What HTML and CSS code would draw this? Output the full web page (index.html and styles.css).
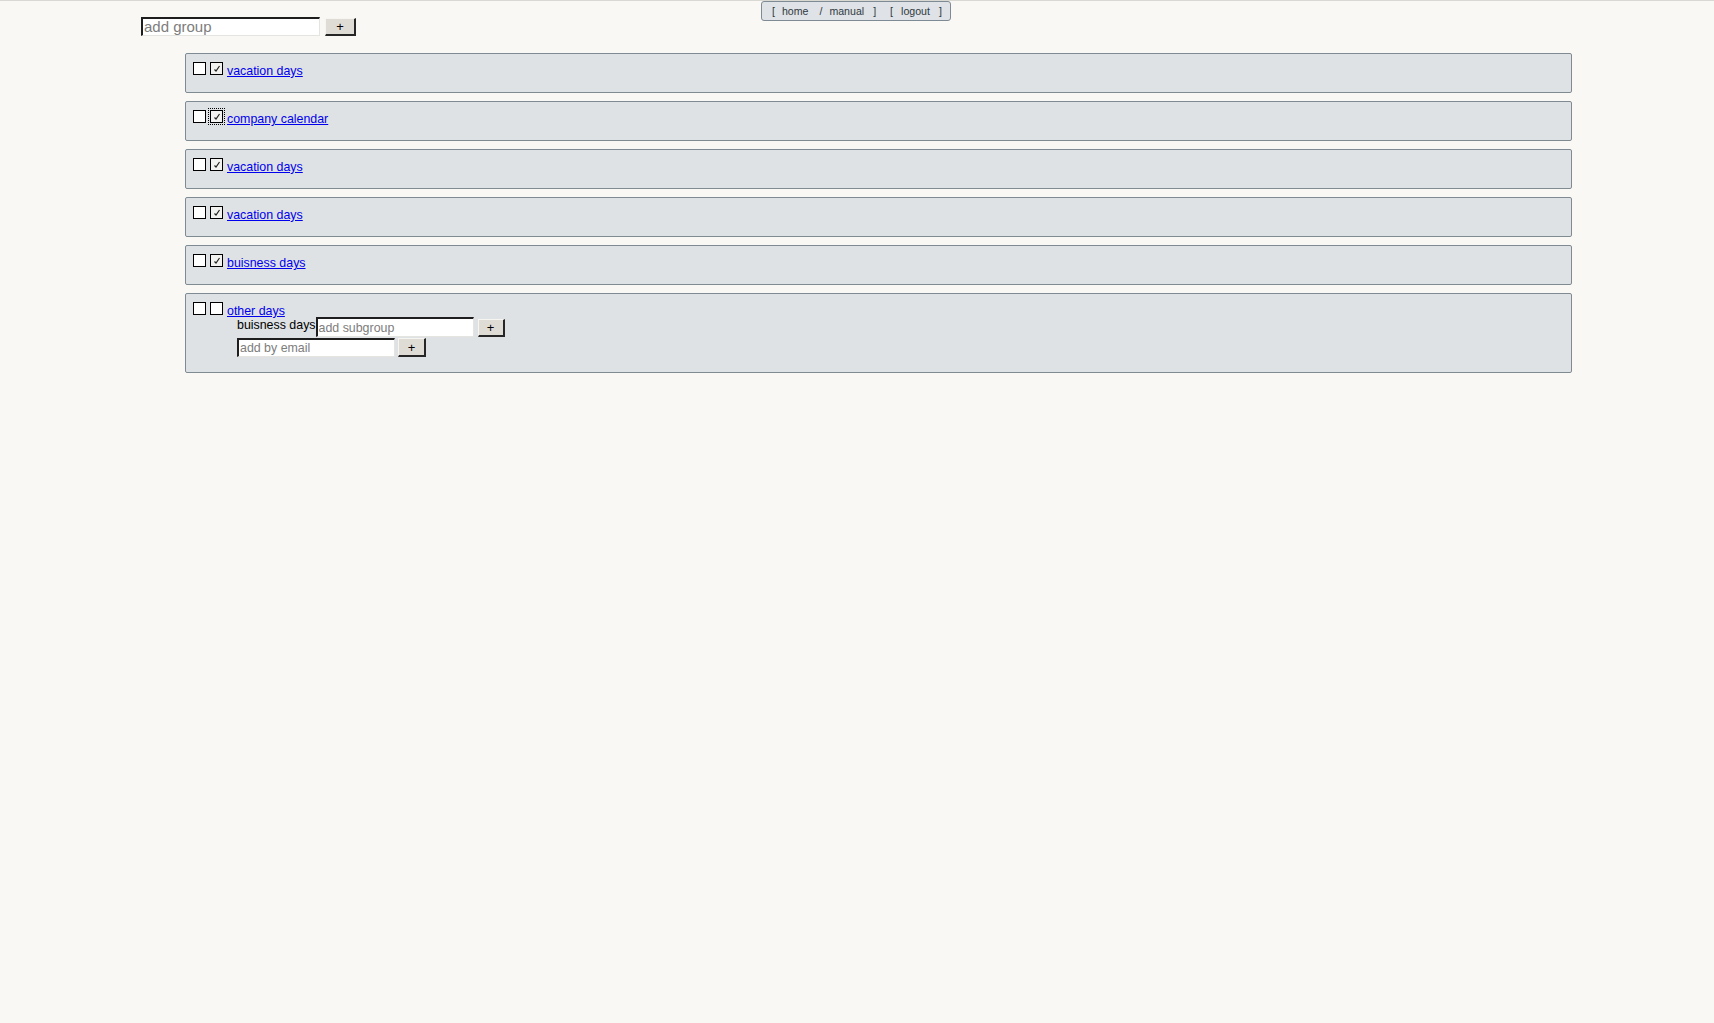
FILE: index.html
```html
<!DOCTYPE html>
<html>
<head>
<meta charset="utf-8">
<link rel="stylesheet" href="styles.css">
</head>
<body>
<div class="nav">
  <span class="br">[</span><a class="nl g7">home</a><span class="sep g11">/</span><a class="nl g7">manual</a><span class="br g9">]</span><span class="br g14">[</span><a class="nl g8">logout</a><span class="br g9">]</span>
</div>
<div class="page">
  <div class="addrow">
    <input class="inp inp-group" type="text" placeholder="add group">
    <button class="btn btn-group">+</button>
  </div>

  <div class="card">
    <div class="row">
      <span class="cb"></span><span class="cb on"><svg viewBox="0 0 11 11" width="11" height="11"><path d="M3.5 6.5 L5 8 L8.5 3" fill="none" stroke="#222" stroke-width="1.2"/></svg></span>
      <a class="lnk" href="#">vacation days</a>
    </div>
  </div>
  <div class="card">
    <div class="row">
      <span class="cb"></span><span class="cb on focus"><svg viewBox="0 0 11 11" width="11" height="11"><path d="M3.5 6.5 L5 8 L8.5 3" fill="none" stroke="#222" stroke-width="1.2"/></svg></span>
      <a class="lnk" href="#">company calendar</a>
    </div>
  </div>
  <div class="card">
    <div class="row">
      <span class="cb"></span><span class="cb on"><svg viewBox="0 0 11 11" width="11" height="11"><path d="M3.5 6.5 L5 8 L8.5 3" fill="none" stroke="#222" stroke-width="1.2"/></svg></span>
      <a class="lnk" href="#">vacation days</a>
    </div>
  </div>
  <div class="card">
    <div class="row">
      <span class="cb"></span><span class="cb on"><svg viewBox="0 0 11 11" width="11" height="11"><path d="M3.5 6.5 L5 8 L8.5 3" fill="none" stroke="#222" stroke-width="1.2"/></svg></span>
      <a class="lnk" href="#">vacation days</a>
    </div>
  </div>
  <div class="card">
    <div class="row">
      <span class="cb"></span><span class="cb on"><svg viewBox="0 0 11 11" width="11" height="11"><path d="M3.5 6.5 L5 8 L8.5 3" fill="none" stroke="#222" stroke-width="1.2"/></svg></span>
      <a class="lnk" href="#">buisness days</a>
    </div>
  </div>
  <div class="card">
    <div class="row">
      <span class="cb"></span><span class="cb"></span>
      <a class="lnk" href="#">other days</a>
    </div>
    <div class="sub">
      <div class="subrow">
        <span class="label">buisness days</span>
        <input class="inp inp-sub" type="text" placeholder="add subgroup">
        <button class="btn btn-sub">+</button>
      </div>
      <div class="subrow email">
        <input class="inp inp-mail" type="text" placeholder="add by email">
        <button class="btn btn-mail">+</button>
      </div>
    </div>
  </div>
</div>
</body>
</html>
```

FILE: styles.css
```css
html, body {
  margin: 0;
  padding: 0;
}
body {
  background: #f9f8f4;
  border-top: 1px solid #d9d8d3;
  font-family: "Liberation Sans", Arial, sans-serif;
  color: #000;
  min-height: 1022px;
  position: relative;
}

.nav {
  position: absolute;
  top: 0;
  left: 761px;
  height: 20px;
  box-sizing: border-box;
  display: flex;
  align-items: center;
  padding: 0 8px 0 10px;
  background: #dfe2e6;
  border: 1px solid #7e8b94;
  border-radius: 3px;
  font-size: 10.6px;
  color: #2f3a42;
  white-space: nowrap;
}
.nav .nl { color: #2f3a42; text-decoration: none; }
.g6 { margin-left: 6px; }
.g7 { margin-left: 7px; }
.g8 { margin-left: 8px; }
.g9 { margin-left: 9px; }
.g11 { margin-left: 11px; }
.g14 { margin-left: 14px; }

.page {
  margin: 0 142px 0 141px;
  padding-top: 16px;
}

.addrow {
  display: flex;
  align-items: flex-start;
  height: 20px;
  margin-bottom: 16px;
}

.inp {
  box-sizing: border-box;
  margin: 0;
  padding: 0 1px;
  background: #fff;
  border-style: solid;
  border-width: 2px 1px 1px 2px;
  border-color: #1e1e1e #e4e4e1 #e4e4e1 #1e1e1e;
  font-family: "Liberation Sans", Arial, sans-serif;
  color: #000;
  outline: none;
}
.inp::placeholder { color: #7d7d7d; }
.inp-group {
  width: 179px;
  height: 19px;
  font-size: 15px;
  padding-bottom: 1px;
}
.inp-sub {
  width: 158px;
  height: 20px;
  font-size: 12.4px;
}
.inp-mail {
  width: 158px;
  height: 19px;
  font-size: 12.4px;
}

.btn {
  box-sizing: border-box;
  margin: 0;
  padding: 0;
  background: #dfdcd6;
  border-style: solid;
  border-width: 1px 2px 2px 1px;
  border-color: #f6f5f2 #262626 #262626 #f6f5f2;
  font-family: "Liberation Sans", Arial, sans-serif;
  font-size: 13px;
  line-height: 1;
  color: #000;
  text-align: center;
}
.btn-group {
  width: 31px;
  height: 18px;
  margin-left: 5px;
  margin-top: 1px;
}
.btn-sub {
  width: 27px;
  height: 18px;
  margin-left: 4px;
  margin-top: 2px;
}
.btn-mail {
  width: 28px;
  height: 19px;
  margin-left: 3px;
}

.card {
  margin-left: 44px;
  margin-bottom: 8px;
  background: #dfe2e5;
  border: 1px solid #7f8b93;
  border-radius: 2px;
  padding: 8px 7px 15px 7px;
}

.row {
  display: flex;
  align-items: flex-start;
  height: 15px;
}

.cb {
  box-sizing: border-box;
  width: 13px;
  height: 13px;
  border: 1px solid #000;
  background: #fff;
  margin-right: 4px;
  display: flex;
  align-items: center;
  justify-content: center;
  flex: none;
}
.cb.on { background: #f2f2f0; }
.cb svg { display: block; }
.cb.focus {
  outline: 1px dotted #000;
  outline-offset: 1px;
}

.lnk {
  font-size: 12.4px;
  line-height: 14px;
  margin-top: 2px;
  color: #0000ee;
  text-decoration: underline;
}

.sub {
  margin-left: 44px;
}
.subrow {
  display: flex;
  align-items: flex-start;
}
.subrow.email {
  margin-top: 1px;
}
.label {
  font-size: 12.4px;
  line-height: 14px;
  margin-top: 1px;
  white-space: nowrap;
}
```
